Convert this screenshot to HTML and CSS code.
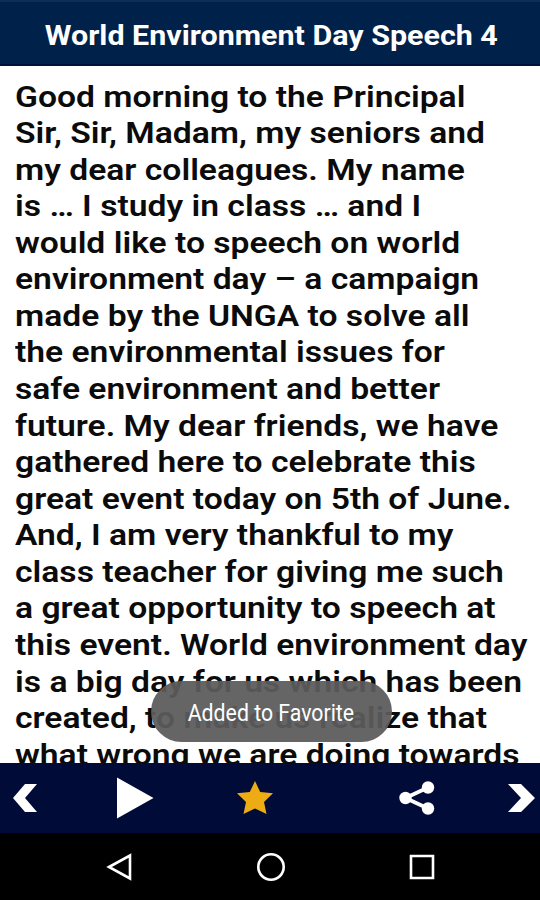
FILE: index.html
```html
<!DOCTYPE html>
<html lang="en">
<head>
  <meta charset="UTF-8" />
  <meta name="viewport" content="width=device-width, initial-scale=1.0"/>
  <title>World Environment Day Speech 4</title>
  <link rel="stylesheet" href="styles.css">
</head>
<body>

<div class="screen">
  <header class="title-bar">
    <h1>World Environment Day Speech 4</h1>
  </header>

  <main class="content">
    <p class="speech">Good morning to the Principal<br>
      Sir, Sir, Madam, my seniors and<br>
      my dear colleagues. My name<br>
      is … I study in class … and I<br>
      would like to speech on world<br>
      environment day – a campaign<br>
      made by the UNGA to solve all<br>
      the environmental issues for<br>
      safe environment and better<br>
      future. My dear friends, we have<br>
      gathered here to celebrate this<br>
      great event today on 5th of June.<br>
      And, I am very thankful to my<br>
      class teacher for giving me such<br>
      a great opportunity to speech at<br>
      this event. World environment day<br>
      is a big day for us which has been<br>
      created, to make us realize that<br>
      what wrong we are doing towards</p>
  </main>

  <div class="toast"><span>Added to Favorite</span></div>

  <footer class="toolbar">
    <svg class="prev" width="26" height="30" viewBox="0 0 26 30"><path d="M1 15L13 1H25L13 15L25 29H13Z" fill="#fff"/></svg>
    <svg class="play" width="38" height="42" viewBox="0 0 38 42"><path d="M1 0.500L37.500 21L1 41.500Z" fill="#fff"/></svg>
    <svg class="star" width="38" height="36" viewBox="0 0 38 36"><path d="M19 1L24.200 12L37 13.200L28 22L30.500 34L19 28.500L7.500 34L10 22L1 13.200L13.800 12Z" fill="#edac13"/></svg>
    <svg class="share" width="38" height="36" viewBox="0 0 38 36"><path d="M30 7.500L7.500 18L30 28.500" fill="none" stroke="#fff" stroke-width="3.800"/><g fill="#fff"><circle cx="7.500" cy="18" r="6.200"/><circle cx="30" cy="7.500" r="6.200"/><circle cx="30" cy="28.500" r="6.200"/></g></svg>
    <svg class="next" width="28" height="30" viewBox="0 0 28 30"><path d="M0 1H13L27 15L13 29H0L13 15Z" fill="#fff"/></svg>
  </footer>

  <nav class="system-nav">
    <svg width="28" height="28" viewBox="0 0 28 28"><path d="M3 14L24 2.500V25.500Z"/></svg>
    <svg width="30" height="30" viewBox="0 0 30 30"><circle cx="15" cy="15" r="12.700"/></svg>
    <svg width="28" height="28" viewBox="0 0 28 28"><path d="M3 3H25V25H3Z"/></svg>
  </nav>
</div>

</body>
</html>
```

FILE: styles.css
```css
* {
  box-sizing: border-box;
}

body {
  margin: 0;
  font-family: Roboto, sans-serif;
}

.screen {
  position: relative;
  display: flex;
  flex-direction: column;
  width: 540px;
  height: 900px;
  overflow: hidden;
  background-color: #fff;
}

.title-bar {
  height: 66px;
  padding: 4px 0 0 2px;
  display: flex;
  align-items: center;
  justify-content: center;
  background-color: #002149;
  border-top: 2px solid #0c2d55;
  border-bottom: 2px solid #00113a;
}

.title-bar h1 {
  margin: 0;
  font-size: 28px;
  font-weight: 700;
  color: #fff;
  white-space: nowrap;
  transform: scaleX(1.087);
}

.content {
  height: 697px;
  padding: 12.500px 0 0 14.700px;
  overflow: hidden;
}

.speech {
  margin: 0;
  font-size: 30px;
  line-height: 36.560px;
  font-weight: 600;
  color: #0b0b0b;
  white-space: nowrap;
  transform: scaleX(1.121);
  transform-origin: left top;
}

.toast {
  position: absolute;
  left: 151px;
  top: 681px;
  width: 241px;
  height: 61px;
  padding: 3px 1px 0 0;
  display: flex;
  align-items: center;
  justify-content: center;
  border-radius: 31px;
  background-color: rgba(91, 91, 91, 0.940);
  color: #fff;
  font-size: 23px;
  white-space: nowrap;
}

.toast span {
  transform: scaleX(0.925);
}

.toolbar {
  height: 70px;
  display: flex;
  align-items: center;
  padding-left: 12px;
  background-color: #000b38;
}

.play {
  margin-left: 78px;
}

.star {
  margin-left: 82px;
}

.share {
  margin-left: 124px;
}

.next {
  margin-left: 72px;
}

.system-nav {
  height: 67px;
  display: flex;
  align-items: center;
  justify-content: center;
  gap: 122px;
  padding-left: 2px;
  background-color: #000;
}

.system-nav svg {
  fill: none;
  stroke: #fff;
  stroke-width: 2.600px;
}
```
